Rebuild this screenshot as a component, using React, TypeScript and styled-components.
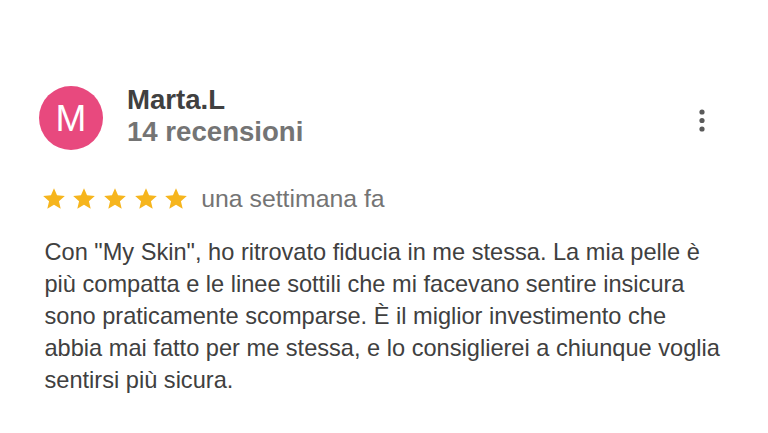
import styled, { createGlobalStyle } from 'styled-components';

const GlobalStyle = createGlobalStyle`
    html, body {
        margin: 0;
        padding: 0;
        background: #ffffff;
    }

    body {
        font-family: 'Liberation Sans', Arial, sans-serif;
    }
`;

type Review = {
    author: string;
    initial: string;
    reviews: number;
    rating: number;
    when: string;
    text: string;
};

const review: Review = {
    author: 'Marta.L',
    initial: 'M',
    reviews: 14,
    rating: 5,
    when: 'una settimana fa',
    text: 'Con "My Skin", ho ritrovato fiducia in me stessa. La mia pelle è più compatta e le linee sottili che mi facevano sentire insicura sono praticamente scomparse. È il miglior investimento che abbia mai fatto per me stessa, e lo consiglierei a chiunque voglia sentirsi più sicura.',
};

const Star = () => (
    <svg width='26' height='26' viewBox='0 0 24 24' aria-hidden='true'>
        <path
            fill='#f6b51d'
            d='M12 17.27L18.18 21l-1.64-7.03L22 9.24l-7.19-.61L12 2 9.19 8.63 2 9.24l5.46 4.73L5.82 21z'
        />
    </svg>
);

const MoreIcon = () => (
    <svg width='10' height='28' viewBox='0 0 10 28' aria-hidden='true'>
        <circle cx='5' cy='5' r='2.6' fill='#5a5a5a' />
        <circle cx='5' cy='13.5' r='2.6' fill='#5a5a5a' />
        <circle cx='5' cy='22' r='2.6' fill='#5a5a5a' />
    </svg>
);

const ReviewCard = ({ author, initial, reviews, rating, when, text }: Review) => {
    const stars = Array.from({ length: rating }, (_, i) => <Star key={i} />);

    return (
        <Card>
            <Header>
                <Avatar>{initial}</Avatar>
                <AuthorInfo>
                    <AuthorName>{author}</AuthorName>
                    <ReviewCount>{reviews} recensioni</ReviewCount>
                </AuthorInfo>
                <MenuButton aria-label='Altre opzioni'>
                    <MoreIcon />
                </MenuButton>
            </Header>
            <RatingRow>
                <Stars>{stars}</Stars>
                <When>{when}</When>
            </RatingRow>
            <Body>{text}</Body>
        </Card>
    );
};

const App = () => (
    <>
        <GlobalStyle />
        <Page>
            <ReviewCard {...review} />
        </Page>
    </>
);

export default App;

const Page = styled.main`
    width: 768px;
    height: 433px;
    padding-top: 84px;
    box-sizing: border-box;
    background: #ffffff;
    overflow: hidden;
`;

const Card = styled.article`
    display: flex;
    flex-direction: column;
    padding: 0 38px 0 39px;
`;

const Header = styled.header`
    display: flex;
    align-items: flex-start;
`;

const Avatar = styled.div`
    width: 64px;
    height: 64px;
    margin-top: 2px;
    border-radius: 50%;
    background: #e8497e;
    color: #ffffff;
    display: flex;
    align-items: center;
    justify-content: center;
    font-size: 37px;
    font-weight: 400;
    line-height: 1;
    flex-shrink: 0;
`;

const AuthorInfo = styled.div`
    display: flex;
    flex-direction: column;
    margin-left: 24px;
    flex: 1;
`;

const AuthorName = styled.span`
    font-size: 27.6px;
    font-weight: 700;
    line-height: 32px;
    color: #404040;
`;

const ReviewCount = styled.span`
    font-size: 27.6px;
    font-weight: 700;
    line-height: 32px;
    color: #747474;
`;

const MenuButton = styled.button`
    display: flex;
    align-items: center;
    justify-content: center;
    width: 24px;
    margin: 23px 16px 0 0;
    padding: 0;
    border: none;
    background: none;
`;

const RatingRow = styled.div`
    display: flex;
    align-items: center;
    height: 26px;
    margin-top: 36px;
`;

const Stars = styled.div`
    display: flex;
    gap: 4.7px;
    margin-left: 1.5px;
`;

const When = styled.span`
    margin-left: 12px;
    font-size: 24.8px;
    line-height: 26px;
    color: #747474;
`;

const Body = styled.p`
    width: 682px;
    margin: 24px 0 0 5.5px;
    font-size: 23.6px;
    line-height: 32px;
    color: #404040;
`;
